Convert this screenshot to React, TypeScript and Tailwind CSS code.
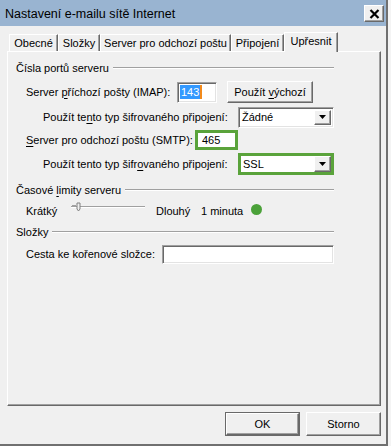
import React from "react";

const sunken =
  "border border-t-[#a0a0a0] border-l-[#a0a0a0] border-r-white border-b-white shadow-[inset_1px_1px_0_#696969,inset_-1px_-1px_0_#e3e3e3]";
const raised =
  "border border-t-white border-l-white border-r-[#696969] border-b-[#696969] shadow-[inset_-1px_-1px_0_#a0a0a0]";

function U({ children }: { children: React.ReactNode }) {
  return <span className="underline underline-offset-[2px]">{children}</span>;
}

function GroupHeader({ children }: { children: React.ReactNode }) {
  return (
    <div className="flex items-center h-[16px] ml-[8px] w-[318px]">
      <span className="whitespace-nowrap">{children}</span>
      <div className="flex-1 ml-[4px] h-[2px] border-t border-t-[#a0a0a0] border-b border-b-white" />
    </div>
  );
}

function DropArrow() {
  return (
    <div className={`w-[17px] h-full bg-[#f0f0f0] flex items-center justify-center ${raised}`}>
      <svg width="7" height="4" viewBox="0 0 7 4">
        <polygon points="0,0 7,0 3.5,4" fill="#000" />
      </svg>
    </div>
  );
}

function Tab({ label, w, selected }: { label: string; w: number; selected?: boolean }) {
  if (selected) {
    return (
      <div
        className="relative z-10 h-[20px] mb-[-1px] bg-[#f0f0f0] border-t border-l border-t-white border-l-white border-r border-r-[#696969] shadow-[inset_-1px_0_0_#a0a0a0] flex items-center justify-center pb-[3px]"
        style={{ width: w }}
      >
        {label}
      </div>
    );
  }
  return (
    <div
      className="h-[17px] bg-[#f0f0f0] border-t border-l border-t-white border-l-white border-r border-r-[#696969] shadow-[inset_-1px_0_0_#a0a0a0] flex items-center justify-center pt-[1px]"
      style={{ width: w }}
    >
      {label}
    </div>
  );
}

export default function App() {
  return (
    <div className="w-[391px] h-[446px] bg-[#f4f4f4] overflow-hidden font-['Liberation_Sans',Arial,sans-serif] text-[11px] text-black leading-none">
      <div className="w-[388px] h-[446px] bg-[#f0f0f0] border-r-2 border-b-2 border-[#707070] flex flex-col">
        {/* Title bar */}
        <div className="h-[26px] bg-[#99b4d1] flex items-center justify-between pl-[5px] pr-[2px]">
          <span className="text-[12.5px] pt-[2px]">Nastavení e-mailu sítě Internet</span>
          <div className={`w-[20px] h-[17px] bg-[#f0f0f0] flex items-center justify-center mt-[1px] ${raised}`}>
            <svg width="11" height="10" viewBox="0 0 11 10">
              <path d="M1.5 1 L9.5 9 M9.5 1 L1.5 9" stroke="#000" strokeWidth="2.2" />
            </svg>
          </div>
        </div>

        {/* Tabs */}
        <div className="h-[25px] flex items-end pl-[9px]">
          <Tab label="Obecné" w={49} />
          <Tab label="Složky" w={42} />
          <Tab label="Server pro odchozí poštu" w={131} />
          <Tab label="Připojení" w={53} />
          <Tab label="Upřesnit" w={54} selected />
        </div>

        {/* Panel */}
        <div className="ml-[7px] w-[374px] h-[355px] border border-t-white border-l-white border-r-[#696969] border-b-[#696969] shadow-[inset_-1px_-1px_0_#a0a0a0] flex flex-col pt-[8px]">
          <GroupHeader>Čísla portů serveru</GroupHeader>

          {/* IMAP */}
          <div className="flex items-center h-[22px] mt-[5px] ml-[18px]">
            <span className="w-[151px] whitespace-nowrap">
              Server <U>p</U>říchozí pošty (IMAP):
            </span>
            <div className={`w-[40px] h-[21px] bg-white flex items-center pl-[2px] ${sunken}`}>
              <span className="bg-[#3399ff] text-white px-[1px] h-[14px] flex items-center">143</span>
              <span className="w-[2px] h-[14px] bg-[#f28a1c]" />
            </div>
            <div className={`ml-[10px] w-[86px] h-[22px] bg-[#f0f0f0] flex items-center justify-center ${raised}`}>
              <span className="whitespace-nowrap">
                Použít <U>v</U>ýchozí
              </span>
            </div>
          </div>

          {/* Enc 1 */}
          <div className="flex items-center h-[20px] mt-[4px] ml-[35px]">
            <span className="w-[195px] whitespace-nowrap">
              Použít te<U>n</U>to typ šifrovaného připojení:
            </span>
            <div className={`w-[96px] h-[21px] bg-white flex items-center p-[2px] ${sunken}`}>
              <span className="flex-1 pl-[1px]">Žádné</span>
              <DropArrow />
            </div>
          </div>

          {/* SMTP */}
          <div className="flex items-center h-[20px] mt-[3px] ml-[18px]">
            <span className="w-[169px] whitespace-nowrap">
              <U>S</U>erver pro odchozí poštu (SMTP):
            </span>
            <div className="w-[43px] h-[20px] bg-white border-[3px] border-[#5aa33b] flex items-center pl-[4px]">
              465
            </div>
          </div>

          {/* Enc 2 */}
          <div className="flex items-center h-[22px] mt-[3px] ml-[35px]">
            <span className="w-[195px] whitespace-nowrap">
              Použít tento typ šifr<U>o</U>vaného připojení:
            </span>
            <div className="w-[96px] h-[22px] bg-white border-[3px] border-[#5aa33b] flex items-center pl-[1px]">
              <span className="flex-1 pl-[1px]">SSL</span>
              <DropArrow />
            </div>
          </div>

          <div className="mt-[7px]">
            <GroupHeader>
              Časové <U>l</U>imity serveru
            </GroupHeader>
          </div>

          {/* Slider row */}
          <div className="flex items-center h-[16px] mt-[5px] ml-[18px]">
            <span className="w-[44px]">Krátký</span>
            <svg width="76" height="16" viewBox="0 0 76 16" className="mt-[-6px]">
              <rect x="1" y="6" width="74" height="1" fill="#a0a0a0" />
              <rect x="1" y="7" width="74" height="1" fill="#ffffff" />
              <rect x="2" y="5" width="4" height="1" fill="#a0a0a0" />
              <path d="M7 3 H10 V9 L8.5 11 L7 9 Z" fill="#f0f0f0" stroke="#808080" strokeWidth="1" />
            </svg>
            <span className="ml-[10px] w-[45px]">Dlouhý</span>
            <span className="w-[50px]">1 minuta</span>
            <span className="w-[11px] h-[11px] rounded-full bg-[#4ba139] mt-[-3px]" />
          </div>

          <div className="mt-[5px]">
            <GroupHeader>Složky</GroupHeader>
          </div>

          {/* Path row */}
          <div className="flex items-center h-[19px] mt-[5px] ml-[18px]">
            <span className="w-[136px] whitespace-nowrap">Cesta ke kořenové složce:</span>
            <div className={`w-[172px] h-[19px] bg-white ${sunken}`} />
          </div>
        </div>

        {/* Buttons */}
        <div className="flex justify-end gap-[6px] mt-[6px] pr-[5px]">
          <div className="w-[75px] h-[24px] border border-[#696969] bg-[#f0f0f0] flex">
            <div className={`flex-1 flex items-center justify-center ${raised}`}>OK</div>
          </div>
          <div className={`w-[75px] h-[24px] bg-[#f0f0f0] flex items-center justify-center ${raised}`}>
            Storno
          </div>
        </div>
      </div>
    </div>
  );
}
